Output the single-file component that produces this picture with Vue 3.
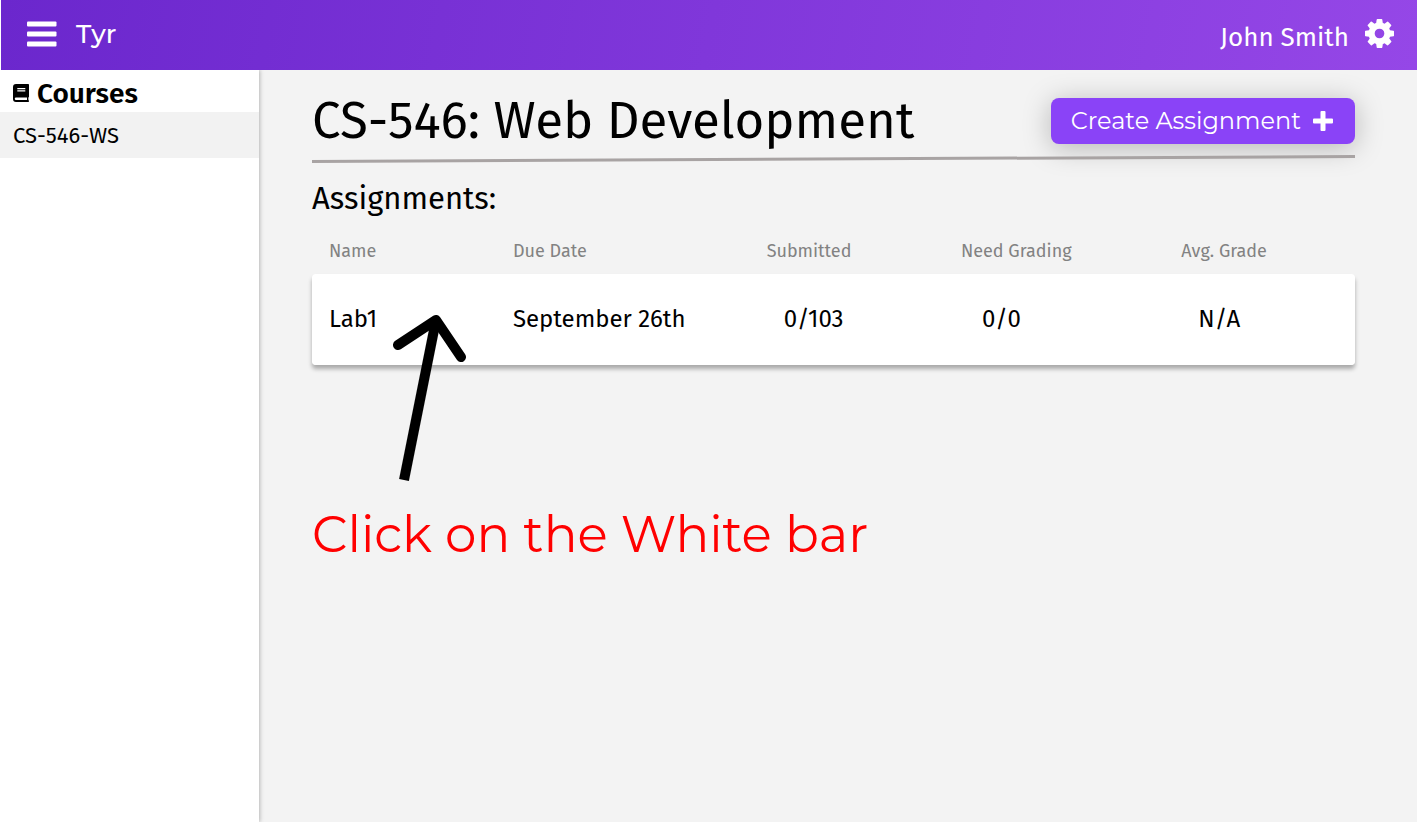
<script setup>
const courses = ['CS-546-WS']
const columns = [
  { label: 'Name', cls: 'name' },
  { label: 'Due Date', cls: 'due' },
  { label: 'Submitted', cls: 'submitted' },
  { label: 'Need Grading', cls: 'grading' },
  { label: 'Avg. Grade', cls: 'average' }
]
const assignments = [
  { name: 'Lab1', due: 'September 26th', submitted: '0/103', grading: '0/0', average: 'N/A' }
]
</script>

<template>
  <div class="page">
    <header class="topbar">
      <button class="icon-button" type="button" aria-label="Menu">
        <svg width="30" height="26" viewBox="0 0 30 26" fill="#fff" aria-hidden="true">
          <rect x="0" y="0.5" width="29.5" height="5" rx="1" />
          <rect x="0" y="10.5" width="29.5" height="5" rx="1" />
          <rect x="0" y="20.5" width="29.5" height="5" rx="1" />
        </svg>
      </button>
      <span class="brand">Tyr</span>
      <span class="user">John Smith</span>
      <button class="icon-button" type="button" aria-label="Settings">
        <svg width="29" height="30" viewBox="0 0 1536 1589" fill="#fff" aria-hidden="true">
          <path d="M1024 768q0-106-75-181t-181-75-181 75-75 181 75 181 181 75 181-75 75-181zm512-109v222q0 12-8 23t-20 13l-185 28q-19 54-39 91 35 50 107 138 10 12 10 25t-9 23q-27 37-99 108t-94 71q-12 0-26-9l-138-108q-44 23-91 38-16 136-29 186-7 28-36 28h-222q-14 0-24.500-8.500t-11.500-21.500l-28-184q-49-16-90-37l-141 107q-10 9-25 9-14 0-25-11-126-114-165-168-7-10-7-23 0-12 8-23 15-21 51-66.500t54-70.500q-27-50-41-99l-183-27q-13-2-21-12.500t-8-23.500v-222q0-12 8-23t19-13l186-28q14-46 39-92-40-57-107-138-10-12-10-24 0-10 9-23 26-36 98.500-107.500t94.500-71.500q13 0 26 10l138 107q44-23 91-38 16-136 29-186 7-28 36-28h222q14 0 24.500 8.500t11.500 21.500l28 184q49 16 90 37l142-107q9-9 24-9 13 0 25 10 129 119 165 170 7 8 7 22 0 12-8 23-15 21-51 66.500t-54 70.500q26 50 41 98l183 28q13 2 21 12.500t8 23.500z" />
        </svg>
      </button>
    </header>

    <div class="body">
      <nav class="sidebar" aria-label="Courses">
        <h2 class="side-title">
          <svg width="16" height="18" viewBox="0 0 16 18" aria-hidden="true">
            <path fill="#000" fill-rule="evenodd" d="M3 0h12.200q.8 0 .8.800v11.700q0 .5-.5.800-.4 1.500 0 3 .5.300.5.800v.100q0 .800-.8.800H3q-3 0-3-3V3q0-3 3-3zM3 13.500a1.200 1.200 0 0 0 0 2.500h11v-2.500zM4.300 4v1.200h8V4zm0 2.300v1.200h8V6.300z" />
          </svg>
          Courses
        </h2>
        <a v-for="course in courses" :key="course" class="course" href="#">{{ course }}</a>
      </nav>

      <main class="content">
        <div class="heading">
          <h1>CS-546: Web Development</h1>
          <button class="create" type="button">
            Create Assignment
            <svg width="20" height="20" viewBox="0 0 20 20" fill="#fff" aria-hidden="true">
              <path d="M8.500 0h3q1 0 1 1v6.500H19q1 0 1 1v3q0 1-1 1h-6.500V19q0 1-1 1h-3q-1 0-1-1v-6.500H1q-1 0-1-1v-3q0-1 1-1h6.500V1q0-1 1-1z" />
            </svg>
          </button>
        </div>
        <svg class="rule" viewBox="0 0 1043 8" preserveAspectRatio="none" aria-hidden="true">
          <path d="M0 4L1043 -1L1043 2L0 7Z" fill="#a8a3a3" />
        </svg>

        <h2 class="section-title">Assignments:</h2>
        <table class="assignments">
          <thead>
            <tr>
              <th v-for="column in columns" :key="column.cls" :class="column.cls" scope="col">{{ column.label }}</th>
            </tr>
          </thead>
          <tbody>
            <tr v-for="row in assignments" :key="row.name">
              <td v-for="column in columns" :key="column.cls" :class="column.cls">{{ row[column.cls] }}</td>
            </tr>
          </tbody>
        </table>

        <p class="hint">
          <svg class="arrow" width="74" height="170" viewBox="0 0 74 170" fill="none" stroke="#000" stroke-width="10" aria-hidden="true">
            <path d="M44 8L12 168" />
            <path d="M6 33L44 8L69 45" stroke-linecap="round" stroke-linejoin="round" />
          </svg>
          Click on the White bar
        </p>
      </main>
    </div>
  </div>
</template>

<style>
body {
  margin: 0;
  background: #fff;
}
</style>

<style scoped>
.page {
  box-sizing: border-box;
  min-height: 100vh;
  display: flex;
  flex-direction: column;
  padding-bottom: 2px;
  color: #000;
  font-family: "Fira Sans", "Noto Sans", sans-serif;
}

h1,
h2,
p {
  margin: 0;
  font-weight: 400;
}

button {
  border: 0;
  padding: 0;
  background: none;
  cursor: pointer;
}

svg {
  display: block;
  flex: none;
}

.topbar {
  display: flex;
  align-items: center;
  height: 70px;
  box-sizing: border-box;
  margin-left: 1px;
  padding: 0 23px 2px 26px;
  background: linear-gradient(100deg, #6b27cd, #9547e7);
  color: #fff;
}

.brand {
  margin-left: 19px;
  font: 500 26px/32px "Montserrat", Inter, sans-serif;
}

.user {
  margin: 8px 16px 0 auto;
  font-size: 26px;
  line-height: 32px;
}

.body {
  flex: 1;
  display: flex;
}

.sidebar {
  flex: none;
  width: 259px;
  z-index: 1;
  background: #fff;
  box-shadow: 1px 0 4px rgba(0, 0, 0, 0.25);
  clip-path: inset(0 -6px 0 0);
}

.side-title {
  display: flex;
  align-items: center;
  gap: 8px;
  height: 42px;
  padding: 4px 13px 0;
  box-sizing: border-box;
  font-size: 28px;
  font-weight: 600;
}

.course {
  display: block;
  padding: 2px 13px 0;
  background: #f2f2f2;
  color: #000;
  font-size: 22px;
  line-height: 44px;
  text-decoration: none;
}

.content {
  flex: 1;
  min-width: 0;
  padding: 16px 62px 16px 53px;
  background: #f3f3f3;
}

.heading {
  display: flex;
  align-items: center;
  justify-content: space-between;
  height: 70px;
}

h1 {
  font-size: 51px;
  line-height: 70px;
  white-space: nowrap;
}

.create {
  display: flex;
  align-items: center;
  gap: 12px;
  height: 46px;
  padding: 0 22px 1px 20px;
  box-sizing: border-box;
  border-radius: 8px;
  background: #8a43f7;
  box-shadow: 0 4px 28px rgba(0, 0, 0, 0.25);
  color: #fff;
  font: 400 24px/32px "Montserrat", Inter, sans-serif;
  white-space: nowrap;
}

.rule {
  width: 100%;
  height: 8px;
  overflow: visible;
}

.section-title {
  padding-top: 14px;
  font-size: 31px;
  line-height: 42px;
}

.assignments {
  width: 100%;
  table-layout: fixed;
  border-spacing: 0;
}

th,
td {
  padding: 0 0 0 17px;
  text-align: left;
  font-weight: 400;
  white-space: nowrap;
}

th {
  height: 46px;
  padding-top: 8px;
  color: #828282;
  font-size: 18px;
}

td {
  height: 89px;
  padding-bottom: 2px;
  background: #fff;
  font-size: 24px;
}

.name {
  width: 16%;
}

.due {
  width: 22.7%;
}

.submitted {
  width: 17%;
}

.grading {
  width: 19.5%;
}

td.submitted,
td.average {
  padding-left: 34px;
}

td.grading {
  padding-left: 38px;
}

tbody tr {
  border-radius: 4px;
  box-shadow: 0 4px 4px rgba(0, 0, 0, 0.3);
}

td:first-child {
  border-radius: 4px 0 0 4px;
}

td:last-child {
  border-radius: 0 4px 4px 0;
}

.hint {
  position: relative;
  margin-top: 138px;
  color: #f00;
  font: 400 50px/64px "Montserrat", Inter, sans-serif;
  white-space: nowrap;
}

.arrow {
  position: absolute;
  left: 80px;
  bottom: 85px;
}
</style>
